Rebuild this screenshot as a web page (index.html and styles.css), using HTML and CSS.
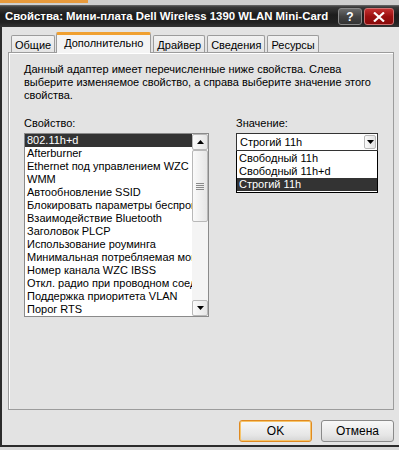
FILE: index.html
```html
<!DOCTYPE html>
<html lang="ru">
<head>
<meta charset="utf-8">
<link rel="stylesheet" href="styles.css">
</head>
<body>
<div class="topstrip"><span class="orange"></span></div>
<div class="window">
  <div class="titlebar">
    <span class="title">Свойства: Мини-плата Dell Wireless 1390 WLAN Mini-Card</span>
    <div class="tbtns">
      <span class="tbtn help">?</span>
      <span class="tbtn close"><svg width="12" height="10" viewBox="0 0 12 10"><path d="M1 0.5 L11 9.5 M11 0.5 L1 9.5" stroke="#fff" stroke-width="2.2"/></svg></span>
    </div>
  </div>
  <div class="body">
    <div class="tabs">
      <span class="tab">Общие</span>
      <span class="tab active">Дополнительно</span>
      <span class="tab">Драйвер</span>
      <span class="tab">Сведения</span>
      <span class="tab">Ресурсы</span>
    </div>
    <div class="panel">
      <p class="desc">Данный адаптер имеет перечисленные ниже свойства. Слева выберите изменяемое свойство, а справа выберите значение этого свойства.</p>
      <div class="cols">
        <div class="col left">
          <div class="label">Свойство:</div>
          <div class="listbox">
            <ul class="items">
              <li class="sel">802.11h+d</li>
              <li>Afterburner</li>
              <li>Ethernet под управлением WZC</li>
              <li>WMM</li>
              <li>Автообновление SSID</li>
              <li>Блокировать параметры беспроводной сети</li>
              <li>Взаимодействие Bluetooth</li>
              <li>Заголовок PLCP</li>
              <li>Использование роуминга</li>
              <li>Минимальная потребляемая мощность</li>
              <li>Номер канала WZC IBSS</li>
              <li>Откл. радио при проводном соединении</li>
              <li>Поддержка приоритета VLAN</li>
              <li>Порог RTS</li>
            </ul>
            <div class="vscroll">
              <span class="sbtn"><svg width="7" height="4" viewBox="0 0 7 4"><path d="M0 4 L3.5 0 L7 4Z" fill="#000"/></svg></span>
              <div class="track"><span class="thumb"><span class="grip"></span></span></div>
              <span class="sbtn"><svg width="7" height="4" viewBox="0 0 7 4"><path d="M0 0 L7 0 L3.5 4Z" fill="#000"/></svg></span>
            </div>
          </div>
        </div>
        <div class="col right">
          <div class="label">Значение:</div>
          <div class="combo">
            <span class="cval">Строгий 11h</span>
            <span class="cbtn"><svg width="7" height="4" viewBox="0 0 7 4"><path d="M0 0 L7 0 L3.5 4Z" fill="#000"/></svg></span>
          </div>
          <ul class="dropdown">
            <li>Свободный 11h</li>
            <li>Свободный 11h+d</li>
            <li class="sel">Строгий 11h</li>
          </ul>
        </div>
      </div>
    </div>
    <div class="buttons">
      <span class="btn default">OK</span>
      <span class="btn">Отмена</span>
    </div>
  </div>
</div>
</body>
</html>
```

FILE: styles.css
```css
* { box-sizing: border-box; }
html, body { margin: 0; padding: 0; }
body {
  width: 399px;
  height: 450px;
  overflow: hidden;
  background: #d8d8d8;
  font-family: "Liberation Sans", Arial, sans-serif;
  font-size: 11px;
  color: #000;
}
.topstrip {
  height: 5px;
  background: #cfcfcf;
  display: flex;
}
.orange { width: 88px; height: 3px; background: #e89a3c; }
.window {
  height: 442px;
  background: #e3e3e3;
  border-left: 2px solid #2b2b2b;
  border-bottom: 2px solid #2b2b2b;
  display: flex;
  flex-direction: column;
}
.titlebar {
  height: 22px;
  margin-left: -2px;
  background: linear-gradient(#6b6b6b 0, #3a3a3a 2px, #1c1c1c 45%, #222 80%, #333 100%);
  display: flex;
  align-items: center;
  justify-content: space-between;
  padding: 0 5px 0 5px;
}
.title {
  color: #fff;
  font-weight: bold;
  font-size: 11.4px;
  white-space: nowrap;
}
.tbtns { display: flex; gap: 2px; margin-top: 1px; }
.tbtn {
  width: 24px; height: 17px;
  border-radius: 3px;
  display: flex; align-items: center; justify-content: center;
  color: #fff; font-weight: bold; font-size: 12px;
  border: 1px solid #8a8a8a;
}
.help { background: linear-gradient(#6a6a6a, #444 50%, #333); }
.close { width: 30px; background: linear-gradient(#c43030, #9a1010 50%, #8a0a0a); border-color: #d07070; }
.body {
  flex: 1;
  display: flex;
  flex-direction: column;
  padding: 5px 5px 0 6px;
}
.tabs {
  display: flex;
  align-items: flex-end;
  height: 20px;
  padding-left: 3px;
  position: relative;
  z-index: 1;
}
.tab {
  height: 17px;
  padding: 2px 3px 0 3px;
  margin-right: 2px;
  border: 1px solid #9c9c9c;
  border-bottom: none;
  background: linear-gradient(#f2f2f2, #e4e4e4);
  border-radius: 2px 2px 0 0;
  white-space: nowrap;
  font-size: 11px;
  line-height: 14px;
}
.tab.active {
  height: 21px;
  background: #f4f4f4;
  border-top: 3px solid #f0a030;
  padding: 1px 7px 0 7px;
  margin: 0 2px 0 -1px;
  margin-bottom: -1px;
}
.panel {
  height: 358px;
  border: 1px solid #9c9c9c;
  background: #e3e3e3;
  padding: 10px 14px 0 15px;
  box-shadow: inset 1px 1px 0 #fff;
}
.desc {
  margin: 0;
  line-height: 13px;
  font-size: 11px;
  width: 356px;
}
.cols {
  display: flex;
  margin-top: 15px;
}
.col.left { width: 185px; }
.col.right { margin-left: 27px; width: 146px; }
.label { height: 16px; line-height: 13px; }
.listbox {
  height: 184px;
  border: 1px solid #8a8a8a;
  background: #fff;
  display: flex;
}
.items {
  list-style: none;
  margin: 0;
  padding: 0;
  flex: 1;
  overflow: hidden;
}
.items li, .dropdown li {
  height: 13px;
  line-height: 13px;
  padding-left: 2px;
  white-space: nowrap;
  overflow: hidden;
  font-size: 11px;
}
.items li.sel, .dropdown li.sel {
  background: #333;
  color: #fff;
}
.vscroll {
  width: 16px;
  display: flex;
  flex-direction: column;
  background: #f4f4f4;
}
.sbtn {
  height: 16px;
  border: 1px solid #b8b8b8;
  border-radius: 2px;
  background: linear-gradient(90deg, #fafafa, #e6e6e6);
  display: flex; align-items: center; justify-content: center;
}
.track { flex: 1; }
.thumb {
  display: flex; align-items: center; justify-content: center;
  height: 72px;
  border: 1px solid #b8b8b8;
  border-radius: 2px;
  background: linear-gradient(90deg, #fafafa, #e6e6e6);
}
.grip {
  width: 8px; height: 7px;
  background: repeating-linear-gradient(#8a8a8a 0 1px, transparent 1px 2px);
}
.combo {
  height: 18px;
  width: 142px;
  border: 1px solid #333;
  background: #fff;
  display: flex;
  align-items: center;
  padding: 1px 1px 1px 3px;
  justify-content: space-between;
}
.cval { font-size: 11px; }
.cbtn {
  width: 12px; height: 14px;
  border: 1px solid #b8b8b8;
  border-radius: 2px;
  background: linear-gradient(90deg, #fafafa, #e2e2e2);
  display: flex; align-items: center; justify-content: center;
}
.dropdown {
  list-style: none;
  margin: 0;
  padding: 1px 0 0 0;
  border: 1px solid #000;
  border-top: none;
  background: #fff;
  height: 42px;
  width: 142px;
}
.buttons {
  display: flex;
  justify-content: flex-end;
  gap: 9px;
  padding: 10px 0 0 0;
}
.btn {
  width: 73px;
  height: 22px;
  border: 1px solid #8a8a8a;
  border-radius: 3px;
  background: linear-gradient(#f8f8f8, #e6e6e6 70%, #d6d6d6);
  display: flex; align-items: center; justify-content: center;
  font-size: 12px;
}
.btn.default {
  border-color: #e08a20;
  box-shadow: inset 0 0 0 1px #f6c46a;
}
```
